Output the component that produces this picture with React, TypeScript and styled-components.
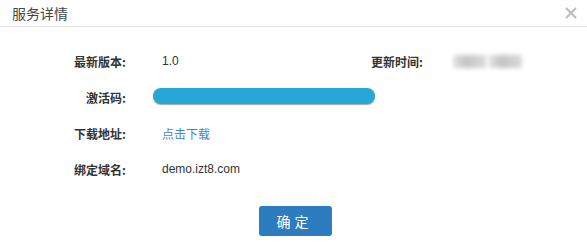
import React from 'react'
import styled, { createGlobalStyle } from 'styled-components'

const GlobalStyle = createGlobalStyle`
  html, body {
    margin: 0;
    padding: 0;
    background: #fff;
  }
  body {
    font-family: "Liberation Sans", "Noto Sans CJK SC", sans-serif;
    color: #333;
  }
`

const Dialog = styled.div`
  width: 587px;
  height: 245px;
  background: #fff;
`

const Header = styled.div`
  height: 26px;
  border-bottom: 1px solid #e3e3e3;
  display: flex;
  align-items: center;
  justify-content: space-between;
  padding: 0 10px 0 12px;
`

const Title = styled.div`
  font-family: "Noto Sans CJK SC", sans-serif;
  font-size: 14px;
  color: #444;
`

const Close = styled.button`
  border: 0;
  background: none;
  padding: 0;
  width: 12px;
  height: 12px;
  display: flex;
  cursor: pointer;
`

const Body = styled.div`
  padding: 16px 0 0 60px;
`

const Row = styled.div`
  height: 36px;
  display: flex;
  align-items: center;
`

const Field = styled.div<{ $width?: number }>`
  display: flex;
  align-items: center;
  width: ${({ $width }) => ($width ? `${$width}px` : 'auto')};
`

const Label = styled.div<{ $gap?: number }>`
  width: 66px;
  margin-right: ${({ $gap }) => $gap ?? 34}px;
  text-align: right;
  font-family: "Noto Sans CJK SC", sans-serif;
  font-weight: 700;
  font-size: 12px;
  color: #333;
  white-space: nowrap;
`

const Value = styled.div`
  font-size: 12px;
  color: #333;
  margin-left: 2px;
`

const Link = styled.a`
  font-family: "Noto Sans CJK SC", sans-serif;
  font-size: 12px;
  color: #3d8bc9;
  text-decoration: none;
  margin-left: 2px;
`

const CodeBar = styled.div`
  width: 222px;
  height: 16px;
  border-radius: 8px;
  background: #27a7d8;
  box-shadow: 0 1px 1px rgba(0, 0, 0, 0.35);
  margin-left: -7px;
  margin-top: -3px;
`

const Blurred = styled.div`
  display: flex;
  gap: 3px;
  filter: blur(2px);
  opacity: 0.75;
`

const BlurBlock = styled.span<{ $w: number }>`
  width: ${({ $w }) => $w}px;
  height: 13px;
  background: linear-gradient(90deg, #d8d8d8, #b0b0b0 40%, #cfcfcf);
`

const Footer = styled.div`
  display: flex;
  justify-content: center;
  padding: 19px 0 0 4px;
`

const Confirm = styled.button`
  width: 73px;
  height: 30px;
  border: 0;
  border-radius: 3px;
  background: #2e7cc0;
  color: #fff;
  font-family: "Noto Sans CJK SC", sans-serif;
  font-size: 14px;
  letter-spacing: 4px;
  padding-left: 4px;
  cursor: pointer;
`

export default function App() {
  return (
    <>
      <GlobalStyle />
      <Dialog>
        <Header>
          <Title>服务详情</Title>
          <Close aria-label="close">
            <svg width="12" height="12" viewBox="0 0 12 12">
              <path d="M1 1L11 11M11 1L1 11" stroke="#bdbdbd" strokeWidth="2" />
            </svg>
          </Close>
        </Header>
        <Body>
          <Row>
            <Field $width={297}>
              <Label>最新版本:</Label>
              <Value>1.0</Value>
            </Field>
            <Field>
              <Label $gap={30}>更新时间:</Label>
              <Blurred>
                <BlurBlock $w={33} />
                <BlurBlock $w={33} />
              </Blurred>
            </Field>
          </Row>
          <Row>
            <Field>
              <Label>激活码:</Label>
              <CodeBar />
            </Field>
          </Row>
          <Row>
            <Field>
              <Label>下载地址:</Label>
              <Link href="#">点击下载</Link>
            </Field>
          </Row>
          <Row>
            <Field>
              <Label>绑定域名:</Label>
              <Value>demo.izt8.com</Value>
            </Field>
          </Row>
        </Body>
        <Footer>
          <Confirm>确定</Confirm>
        </Footer>
      </Dialog>
    </>
  )
}
